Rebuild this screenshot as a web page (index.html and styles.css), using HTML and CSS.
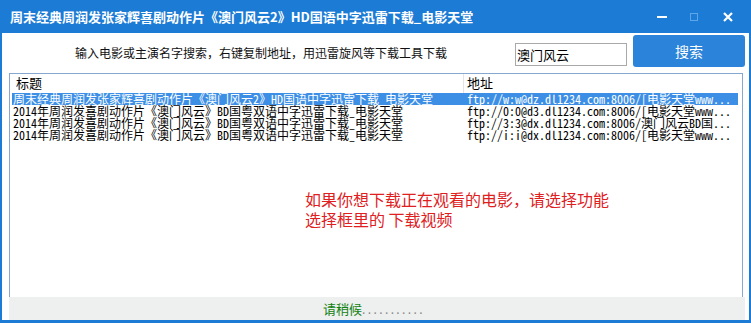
FILE: index.html
```html
<!DOCTYPE html>
<html lang="zh-CN">
<head>
<meta charset="utf-8">
<title>电影天堂</title>
<link rel="stylesheet" href="styles.css">
</head>
<body>
<div class="window">
  <div class="titlebar">
    <div class="title">周末经典周润发张家辉喜剧动作片《澳门风云2》HD国语中字迅雷下载_电影天堂</div>
    <div class="controls">
      <span class="ctl min"></span>
      <span class="ctl max"></span>
      <svg class="ctl close" width="10" height="10" viewBox="0 0 10 10"><path d="M1 1L9 9M9 1L1 9" stroke="#fff" stroke-width="2.2" fill="none"/></svg>
    </div>
  </div>
  <div class="frame">
    <div class="searchrow">
      <div class="hint">输入电影或主演名字搜索，右键复制地址，用迅雷旋风等下载工具下载</div>
      <div class="input">澳门风云</div>
      <div class="btn">搜索</div>
    </div>
    <div class="listbox">
      <div class="lhead">
        <div class="c1">标题</div>
        <div class="c2">地址</div>
      </div>
      <div class="rows">
        <div class="row sel"><div class="c1">周末经典周润发张家辉喜剧动作片《澳门风云2》HD国语中字迅雷下载_电影天堂</div><div class="c2">ftp://w:w@dz.dl1234.com:8006/[电影天堂www...</div></div>
        <div class="row"><div class="c1">2014年周润发喜剧动作片《澳门风云》BD国粤双语中字迅雷下载_电影天堂</div><div class="c2">ftp://0:0@d3.dl1234.com:8006/[电影天堂www...</div></div>
        <div class="row"><div class="c1">2014年周润发喜剧动作片《澳门风云》BD国粤双语中字迅雷下载_电影天堂</div><div class="c2">ftp://3:3@dx.dl1234.com:8006/澳门风云BD国...</div></div>
        <div class="row"><div class="c1">2014年周润发喜剧动作片《澳门风云》BD国粤双语中字迅雷下载_电影天堂</div><div class="c2">ftp://i:i@dx.dl1234.com:8006/[电影天堂www...</div></div>
      </div>
      <div class="note">如果你想下载正在观看的电影，请选择功能<br>选择框里的 下载视频</div>
    </div>
    <div class="status"><span class="wait">请稍候</span><span class="dots">...........</span></div>
  </div>
</div>
</body>
</html>
```
FILE: styles.css
```css
* { box-sizing: border-box; }
html, body { margin: 0; padding: 0; background: #fff; }
body { width: 751px; height: 323px; overflow: hidden; font-family: "Noto Sans CJK SC", "Noto Sans", sans-serif; }
.window { width: 751px; height: 323px; display: flex; flex-direction: column; }
.titlebar {
  height: 33px; background: #1c7bd5; color: #fff;
  display: flex; align-items: center; justify-content: space-between;
  padding: 0 18px 0 10px;
}
.title { font-size: 13px; font-weight: bold; letter-spacing: 0; white-space: nowrap; }
.controls { display: flex; align-items: center; }
.ctl.min { width: 10px; height: 2px; background: #fff; margin-top: 1px; }
.ctl.max { width: 8px; height: 8px; border: 1px solid #5ea6ea; margin-left: 23px; }
.ctl.close { display: block; margin-left: 25px; }
.frame {
  flex: 1; display: flex; flex-direction: column;
  border-left: 2px solid #1c7bd5; border-right: 2px solid #1c7bd5; border-bottom: 3px solid #1c7bd5;
  padding: 2px 4px 0 7px;
}
.searchrow { height: 32px; display: flex; align-items: center; }
.hint { font-size: 12px; color: #111; margin-left: 66px; width: 440px; padding-top: 2px; }
.input {
  width: 112px; height: 23px; border: 1px solid #a9a9a9; font-size: 13px; line-height: 21px;
  padding-left: 1px; color: #000; margin-top: 7px;
}
.btn {
  margin-left: 6px; width: 112px; height: 32px; background: #2b84d9; border-radius: 3px;
  color: #fff; font-size: 14px; display: flex; align-items: center; justify-content: center;
}
.listbox {
  margin-top: 6px; width: 734px; height: 224px; border: 1px solid #86a8d0; border-bottom: 0;
  display: flex; flex-direction: column; padding: 0 4px 0 2px;
}
.lhead { height: 19px; display: flex; font-size: 13px; color: #000; line-height: 18px; }
.lhead .c1 { width: 451px; padding-left: 4px; }
.lhead .c2 { padding-left: 3px; border-left: 1px solid #e4e4e4; }
.rows { font-family: "Noto Sans Mono CJK SC", "Liberation Mono", monospace; font-size: 12px; }
.row { height: 12px; line-height: 12px; display: flex; white-space: nowrap; color: #000; }
.row.sel { background: #3d8fe6; color: #fff; }
.row .c1 { width: 452px; padding-left: 1px; }
.row .c2 { padding-left: 3px; }
.note { margin: 48px 0 0 293px; color: #e0201e; font-size: 16px; line-height: 20px; }
.status {
  height: 23px; width: 736px; background: #eeefef; display: flex; align-items: center; justify-content: center;
  font-size: 13px; padding-right: 6px;
}
.wait { color: #128212; }
.dots { color: #8a8a8a; font-size: 12px; letter-spacing: 2.4px; }
```
